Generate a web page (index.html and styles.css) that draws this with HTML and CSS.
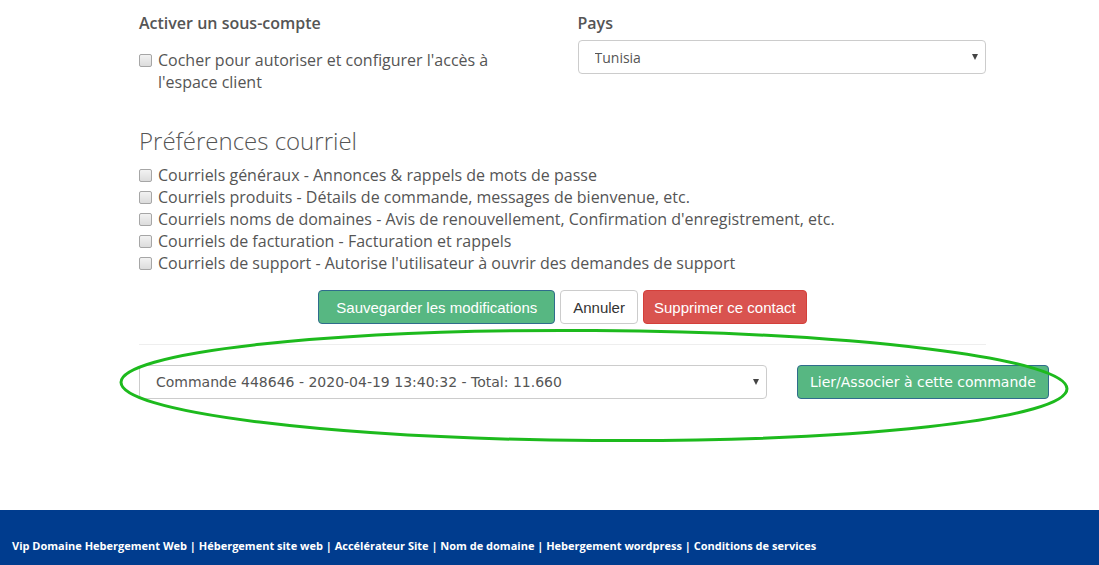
FILE: index.html
```html
<!DOCTYPE html>
<html lang="fr">
<head>
    <meta charset="UTF-8">
    <title>Contact</title>
    <link rel="stylesheet" href="styles.css">
</head>
<body>
    <div class="content">
        <div class="row">
            <div class="col">
                <label class="field-label">Activer un sous-compte</label>
                <label class="check check-sub">
                    <input type="checkbox">
                    <span>Cocher pour autoriser et configurer l'accès à<br>l'espace client</span>
                </label>
            </div>
            <div class="col">
                <label class="field-label" for="country">Pays</label>
                <div class="select-wrap">
                    <select id="country" class="form-select">
                        <option>Tunisia</option>
                    </select>
                </div>
            </div>
        </div>

        <h3 class="section-title">Préférences courriel</h3>
        <div class="prefs">
            <label class="check"><input type="checkbox"><span>Courriels généraux - Annonces &amp; rappels de mots de passe</span></label>
            <label class="check"><input type="checkbox"><span>Courriels produits - Détails de commande, messages de bienvenue, etc.</span></label>
            <label class="check"><input type="checkbox"><span>Courriels noms de domaines - Avis de renouvellement, Confirmation d'enregistrement, etc.</span></label>
            <label class="check"><input type="checkbox"><span>Courriels de facturation - Facturation et rappels</span></label>
            <label class="check"><input type="checkbox"><span>Courriels de support - Autorise l'utilisateur à ouvrir des demandes de support</span></label>
        </div>

        <div class="actions">
            <button class="btn btn-success btn-save">Sauvegarder les modifications</button>
            <button class="btn btn-default">Annuler</button>
            <button class="btn btn-danger">Supprimer ce contact</button>
        </div>

        <hr class="divider">

        <div class="link-row">
            <div class="select-wrap order-select">
                <select class="form-select">
                    <option>Commande 448646 - 2020-04-19 13:40:32 - Total: 11.660</option>
                </select>
            </div>
            <button class="btn btn-success btn-link-order">Lier/Associer à cette commande</button>
            <svg class="highlight" width="952" height="115" viewBox="0 0 952 115">
                <ellipse cx="476" cy="57.5" rx="473" ry="55" transform="rotate(0.4 476 57.5)" fill="none" stroke="#1dba1d" stroke-width="3"/>
            </svg>
        </div>
    </div>

    <footer class="site-footer">
        Vip Domaine Hebergement Web | Hébergement site web | Accélérateur Site | Nom de domaine | Hebergement wordpress | Conditions de services
    </footer>
</body>
</html>
```

FILE: styles.css
```css
body {
    margin: 0;
    font-family: 'Open Sans', sans-serif;
    color: #555;
    background-color: #fff;
}
.content {
    width: 847px;
    margin-left: 139px;
    padding-top: 12px;
    height: 498px;
}
.row {
    display: flex;
    gap: 30px;
}
.col {
    flex: 1;
}
.field-label {
    display: block;
    font-size: 16px;
    font-weight: 600;
    line-height: 22px;
    margin-bottom: 6px;
}
.check {
    display: flex;
    align-items: flex-start;
    font-size: 16px;
    line-height: 22px;
}
.check-sub {
    margin-top: 15px;
}
.check input {
    appearance: none;
    width: 13px;
    height: 13px;
    margin: 5px 6px 0 0;
    flex-shrink: 0;
    border: 1px solid #a6a6a6;
    border-radius: 2px;
    background: linear-gradient(#f2f2f2, #dcdcdc);
}
.select-wrap {
    position: relative;
}
.select-wrap::after {
    content: '';
    position: absolute;
    right: 8px;
    top: 14px;
    border-left: 3.5px solid transparent;
    border-right: 3.5px solid transparent;
    border-top: 6px solid #444;
    pointer-events: none;
}
.form-select {
    appearance: none;
    width: 100%;
    height: 34px;
    padding: 0 16px;
    border: 1px solid #ccc;
    border-radius: 4px;
    background-color: #fff;
    font-family: 'Open Sans', sans-serif;
    font-size: 14px;
    color: #555;
}
.section-title {
    font-size: 24px;
    font-weight: 300;
    line-height: 26px;
    margin: 35px 0 10px;
}
.actions {
    display: flex;
    justify-content: center;
    gap: 5px;
    margin-top: 16px;
}
.btn {
    height: 34px;
    padding: 0 12px;
    font-family: 'Liberation Sans', Arial, sans-serif;
    font-size: 15px;
    border: 1px solid transparent;
    border-radius: 4px;
    cursor: pointer;
}
.btn-save {
    padding: 0 17px;
}
.btn-success {
    background-color: #57b782;
    border-color: #2f6c8c;
    color: #fff;
}
.btn-default {
    background-color: #fff;
    border-color: #ccc;
    color: #333;
}
.btn-danger {
    padding: 0 10px;
    background-color: #d9534f;
    border-color: #d43f3a;
    color: #fff;
}
.divider {
    border: 0;
    border-top: 1px solid #eee;
    margin: 20px 0;
}
.link-row {
    position: relative;
    display: flex;
    gap: 30px;
}
.order-select {
    width: 628px;
    flex-shrink: 0;
}
.order-select .form-select {
    font-family: 'DejaVu Sans', Verdana, sans-serif;
}
.btn-link-order {
    flex-shrink: 0;
    font-family: 'DejaVu Sans', Verdana, sans-serif;
    font-size: 14px;
    white-space: nowrap;
}
.highlight {
    position: absolute;
    left: -21px;
    top: -37px;
    pointer-events: none;
}
.site-footer {
    background-color: #003c8e;
    color: #fff;
    font-family: 'Open Sans', sans-serif;
    font-weight: 700;
    font-size: 11px;
    line-height: 16px;
    padding: 28px 12px 40px;
}
```
